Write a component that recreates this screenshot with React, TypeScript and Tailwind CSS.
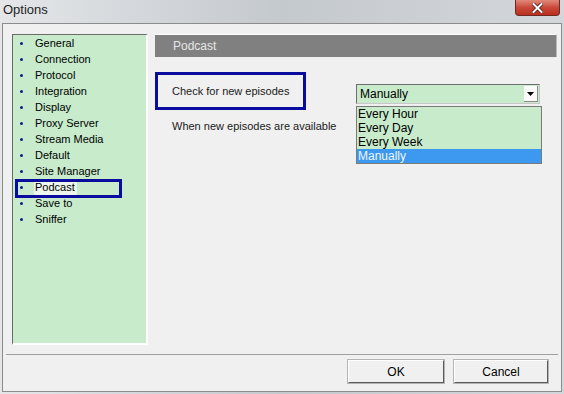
import React from 'react';

const pages = [
  'General',
  'Connection',
  'Protocol',
  'Integration',
  'Display',
  'Proxy Server',
  'Stream Media',
  'Default',
  'Site Manager',
  'Podcast',
  'Save to',
  'Sniffer',
];

const options = ['Every Hour', 'Every Day', 'Every Week', 'Manually'];

export default function App() {
  const selected = 'Podcast';

  return (
    <div
      className="w-[564px] h-[394px] overflow-hidden flex flex-col bg-gradient-to-r from-[#e4e6e8] via-[#c4c9ce] to-[#d3d7db] text-black"
      style={{ fontFamily: '"Liberation Sans", Arial, sans-serif' }}
    >
      {/* title bar */}
      <div className="h-[23px] flex items-start justify-between shrink-0">
        <div className="pl-[3px] pt-[2px] text-[13px] leading-[16px] text-[#1e1e1e]">Options</div>
        <div className="mr-[4px] w-[45px] h-[16px] rounded-b-[4px] border border-t-0 border-[#6e2a22] bg-gradient-to-b from-[#e0897a] via-[#c9483a] to-[#b9301f] flex items-center justify-center">
          <svg width="11" height="10" viewBox="0 0 11 10">
            <path d="M1.5 1 L9.5 9 M9.5 1 L1.5 9" stroke="#4a1a14" strokeWidth="3.6" strokeLinecap="square" />
            <path d="M1.5 1 L9.5 9 M9.5 1 L1.5 9" stroke="#ffffff" strokeWidth="2" strokeLinecap="square" />
          </svg>
        </div>
      </div>

      {/* client area */}
      <div className="ml-[2px] w-[560px] h-[369px] border border-[#8c8c8c] bg-[#f0f0f0] flex flex-col text-[11px]">
        <div className="flex pl-[9px] pt-[10px]">
          {/* page list */}
          <ul className="w-[136px] h-[311px] bg-[#c7ebcb] border-t border-l border-t-[#6a6a6a] border-l-[#6a6a6a] border-b-2 border-r-2 border-b-white border-r-white">
            {pages.map((p) => (
              <li key={p} className="relative h-[16px] flex items-center">
                <span className="ml-[7px] w-[3px] h-[3px] rounded-full bg-[#0b1a8c]" />
                <span
                  className={
                    p === selected
                      ? 'ml-[11px] pl-[1px] pr-[2px] bg-[#eef7ee] leading-[15px]'
                      : 'ml-[12px] leading-[15px]'
                  }
                >
                  {p}
                </span>
                {p === selected && (
                  <span className="absolute left-[2px] top-[0px] w-[107px] h-[19px] border-[3px] border-[#0a0c9e]" />
                )}
              </li>
            ))}
          </ul>

          {/* page content */}
          <div className="ml-[7px] w-[402px] flex flex-col">
            <div className="h-[23px] bg-[#808080] border-t border-t-white border-r border-r-[#b8b8b8] flex items-center pl-[18px] text-[12px] text-[#e6e6e6]">
              Podcast
            </div>

            <div className="flex items-start mt-[15px]">
              <div className="w-[151px] h-[38px] border-[3px] border-[#0a0c9e] flex items-center pl-[14px] text-[#1a1a1a]">
                Check for new episodes
              </div>

              <div className="relative ml-[50px] mt-[12px] w-[184px] h-[20px] border border-[#6e6e6e] border-b-[#c8c8c8] border-r-[#c8c8c8] bg-[#c7ebcb] flex items-center text-[12px]">
                <span className="pl-[3px] flex-1 leading-[14px]">Manually</span>
                <span className="mr-[1px] w-[14px] h-[16px] bg-[#fafafa] border-r border-b border-[#8a8a8a] flex items-center justify-center">
                  <svg width="7" height="4" viewBox="0 0 7 4">
                    <path d="M0 0 H7 L3.5 4 Z" fill="#000" />
                  </svg>
                </span>

                <div className="absolute left-[-1px] top-[21px] w-[186px] border border-[#7a7a7a] bg-[#c7ebcb] flex flex-col">
                  {options.map((o) => (
                    <div
                      key={o}
                      className={
                        o === 'Manually'
                          ? 'h-[14px] pl-[1px] leading-[14px] bg-[#3d99f0] text-[#eef6ff]'
                          : 'h-[14px] pl-[1px] leading-[14px]'
                      }
                    >
                      {o}
                    </div>
                  ))}
                </div>
              </div>
            </div>

            <div className="mt-[10px] pl-[17px] leading-[13px] text-[#1a1a1a]">
              When new episodes are available
            </div>
          </div>
        </div>

        {/* separator */}
        <div className="mt-[9px] mx-[3px] h-[1px] bg-[#a0a0a0]" />

        {/* buttons */}
        <div className="mt-[5px] flex justify-end gap-[10px] pr-[13px]">
          <button className="w-[96px] h-[23px] bg-[#f0f0f0] border border-t-white border-l-white border-b-[#5a5a5a] border-r-[#5a5a5a] outline outline-1 outline-[#b4b4b4] text-[12px]">
            OK
          </button>
          <button className="w-[94px] h-[23px] bg-[#f0f0f0] border border-t-white border-l-white border-b-[#5a5a5a] border-r-[#5a5a5a] outline outline-1 outline-[#b4b4b4] text-[12px]">
            Cancel
          </button>
        </div>
      </div>
    </div>
  );
}
